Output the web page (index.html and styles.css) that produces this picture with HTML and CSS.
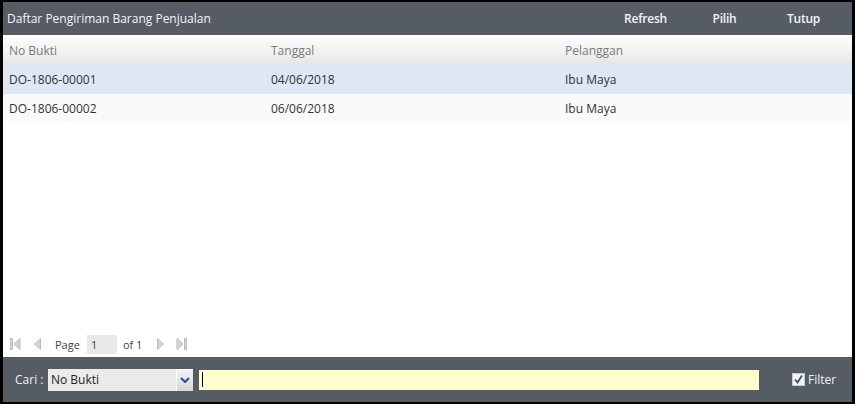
FILE: index.html
```html
<!DOCTYPE html>
<html>
<head>
<meta charset="utf-8">
<link rel="stylesheet" href="styles.css">
</head>
<body>
<div class="window">
  <div class="titlebar">
    <div class="title">Daftar Pengiriman Barang Penjualan</div>
    <div class="actions">
      <span class="btn">Refresh</span>
      <span class="btn">Pilih</span>
      <span class="btn">Tutup</span>
    </div>
  </div>
  <div class="grid-head row">
    <div>No Bukti</div><div>Tanggal</div><div>Pelanggan</div>
  </div>
  <div class="row sel">
    <div>DO-1806-00001</div><div>04/06/2018</div><div>Ibu Maya</div>
  </div>
  <div class="row alt">
    <div>DO-1806-00002</div><div>06/06/2018</div><div>Ibu Maya</div>
  </div>
  <div class="spacer"></div>
  <div class="pager">
    <svg class="pi first" width="11" height="12" viewBox="0 0 11 12"><rect x="0.5" y="0.5" width="2" height="11" fill="#d4d4d4" stroke="#bdbdbd" stroke-width="1"/><path d="M10 0.5 L4 6 L10 11.5 Z" fill="#d4d4d4" stroke="#bdbdbd" stroke-width="1"/></svg>
    <svg class="pi prev" width="7" height="12" viewBox="0 0 7 12"><path d="M6.5 0.5 L0.5 6 L6.5 11.5 Z" fill="#d4d4d4" stroke="#bdbdbd" stroke-width="1"/></svg>
    <span class="plabel">Page</span>
    <span class="pinput">1</span>
    <span class="pof">of 1</span>
    <svg class="pi next" width="7" height="12" viewBox="0 0 7 12"><path d="M0.5 0.5 L6.5 6 L0.5 11.5 Z" fill="#d4d4d4" stroke="#bdbdbd" stroke-width="1"/></svg>
    <svg class="pi last" width="11" height="12" viewBox="0 0 11 12"><path d="M1 0.5 L7 6 L1 11.5 Z" fill="#d4d4d4" stroke="#bdbdbd" stroke-width="1"/><rect x="8.5" y="0.5" width="2" height="11" fill="#d4d4d4" stroke="#bdbdbd" stroke-width="1"/></svg>
  </div>
  <div class="bottombar">
    <span class="cari">Cari :</span>
    <div class="select">
      <span class="seltext">No Bukti</span>
      <span class="selbtn"><svg width="10" height="6" viewBox="0 0 10 6"><path d="M1 1 L5 5 L9 1" fill="none" stroke="#2c4f8f" stroke-width="2"/></svg></span>
    </div>
    <div class="search"><span class="caret"></span></div>
    <div class="filter">
      <span class="chk"><svg width="11" height="11" viewBox="0 0 11 11"><path d="M2 5.5 L4.5 8.5 L9 1.5" fill="none" stroke="#2c4f8f" stroke-width="1.8"/></svg></span>
      <span class="ftext">Filter</span>
    </div>
  </div>
</div>
</body>
</html>
```
FILE: styles.css
```css
html, body {
  margin: 0;
  padding: 0;
  background: #000;
}
body {
  padding: 2px 3px 2px 3px;
  font-family: "Segoe UI", "Open Sans", "Noto Sans", sans-serif;
  font-size: 12px;
}
.window {
  width: 849px;
  height: 400px;
  background: #fff;
  display: flex;
  flex-direction: column;
}
.titlebar {
  height: 33px;
  background: #565c64;
  display: flex;
  align-items: center;
  color: #f4f4f4;
  flex: none;
}
.title {
  padding-left: 4px;
}
.actions {
  margin-left: auto;
  display: flex;
  padding-right: 9px;
}
.btn {
  width: 79px;
  text-align: center;
  font-weight: 600;
  letter-spacing: -0.2px;
}
.row {
  display: grid;
  grid-template-columns: 262px 294px 1fr;
  padding-left: 6px;
  align-items: center;
  color: #333;
  flex: none;
}
.grid-head {
  height: 30px;
  background: linear-gradient(#fdfdfd, #f2f1f1 60%, #e5e4e4);
  color: #7a7a7a;
}
.sel {
  height: 29px;
  background: #dde7f5;
}
.alt {
  height: 28px;
  background: #fafafa;
}
.spacer {
  flex: 1;
}
.pager {
  height: 26px;
  flex: none;
  display: flex;
  align-items: center;
  color: #444;
  font-size: 11px;
}
.pi {
  display: block;
}
.first { margin-left: 7px; }
.prev { margin-left: 13px; }
.plabel { margin-left: 14px; }
.pinput {
  margin-left: 7px;
  width: 26px;
  height: 19px;
  background: #e9e9e9;
  padding-left: 4px;
  line-height: 19px;
}
.pof { margin-left: 6px; }
.next { margin-left: 15px; }
.last { margin-left: 12px; }
.bottombar {
  height: 45px;
  flex: none;
  background: #565c64;
  display: flex;
  align-items: center;
}
.cari {
  color: #f0f0f0;
  margin-left: 12px;
  width: 33px;
}
.select {
  width: 145px;
  height: 22px;
  background: #ebebeb;
  display: flex;
  align-items: center;
  color: #222;
}
.seltext {
  padding-left: 3px;
  flex: 1;
}
.selbtn {
  width: 16px;
  height: 21px;
  border-top: 1px solid #fff;
  border-left: 1px solid #fff;
  background: linear-gradient(#f2f2f2, #d6d6d6);
  display: flex;
  align-items: center;
  justify-content: center;
}
.search {
  margin-left: 6px;
  width: 560px;
  height: 20px;
  background: #fffdcc;
  display: flex;
  align-items: center;
}
.caret {
  margin-left: 3px;
  width: 1px;
  height: 15px;
  background: #000;
}
.filter {
  margin-left: 33px;
  display: flex;
  align-items: center;
}
.chk {
  width: 11px;
  height: 11px;
  background: #f4f4f4;
  border: 1px solid #c8c8c8;
  display: flex;
}
.ftext {
  color: #f0f0f0;
  margin-left: 3px;
}
```
